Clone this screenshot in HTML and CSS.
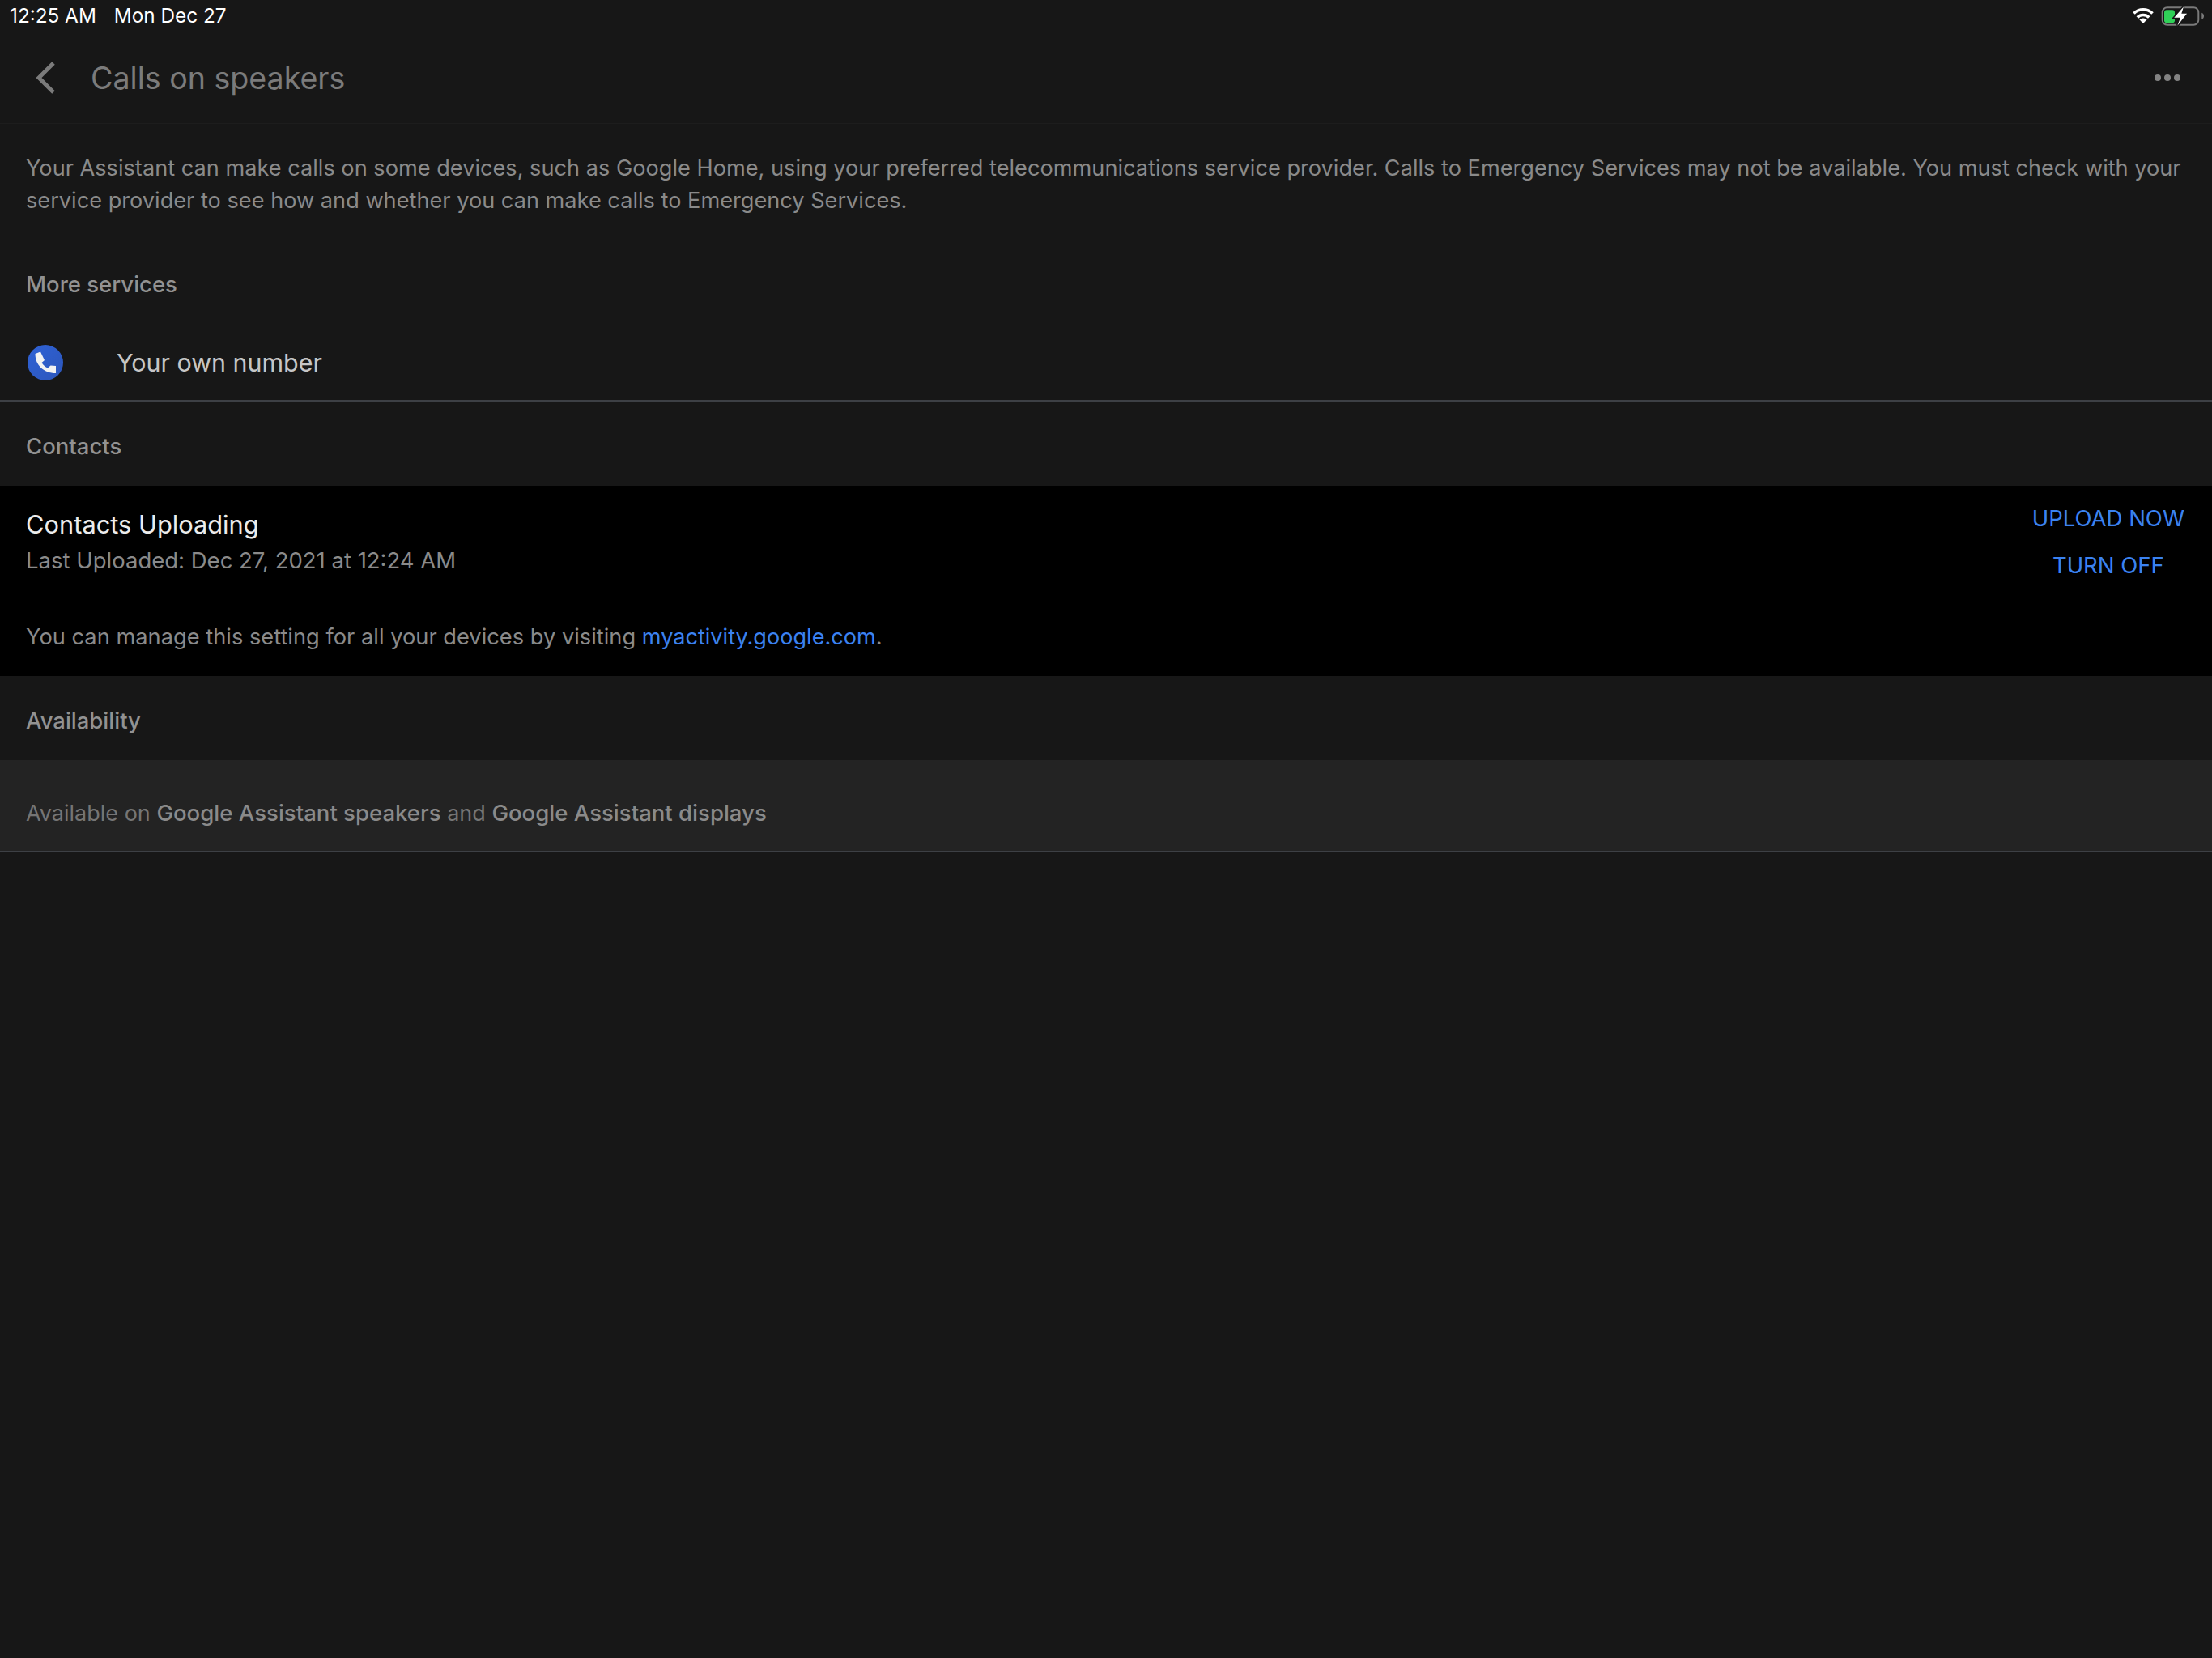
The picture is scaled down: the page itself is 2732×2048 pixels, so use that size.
FILE: index.html
```html
<!DOCTYPE html>
<html lang="en">
<head>
<meta charset="utf-8">
<title>Calls on speakers</title>
<link rel="stylesheet" href="styles.css">
</head>
<body>
<div class="status">
  <div class="status-left"><span>12:25 AM</span><span>Mon Dec 27</span></div>
  <div class="status-right">
    <svg class="wifi" width="28" height="22" viewBox="0 0 28 22"><path d="M14 21l-4.600-4.700a6.600 6.600 0 0 1 9.200 0z" fill="#fff"/><path d="M6.800 13.500a10.300 10.300 0 0 1 14.400 0M2.500 8.500a16.400 16.400 0 0 1 23 0" fill="none" stroke="#fff" stroke-width="3.600"/></svg>
    <svg class="battery" width="54" height="26" viewBox="0 0 54 26"><rect x="2.700" y="3.300" width="44.600" height="21.400" rx="6" fill="none" stroke="#7a7a7a" stroke-width="2"/><rect x="5" y="6.300" width="13" height="16" rx="3" fill="#30d158"/><path d="M51.300 9.700c2 .6 2.700 2.400 2.700 4.100s-.7 3.600-2.700 4.200z" fill="#7a7a7a"/><path d="M29 2.300L17.300 15.700H25l-3.700 10L33 10.700h-6.700z" fill="#fff" stroke="#171717" stroke-width="3" paint-order="stroke"/></svg>
  </div>
</div>
<header class="topbar">
  <svg class="back" width="26" height="42" viewBox="0 0 26 42"><path d="M23 3L5 21l18 18" fill="none" stroke="#7b7b7b" stroke-width="5"/></svg>
  <h1 class="title">Calls on speakers</h1>
  <div class="dots"><i></i><i></i><i></i></div>
</header>
<p class="intro">Your Assistant can make calls on some devices, such as Google Home, using your preferred telecommunications service provider. Calls to Emergency Services may not be available. You must check with your service provider to see how and whether you can make calls to Emergency Services.</p>
<h2 class="section first">More services</h2>
<div class="service">
  <svg class="phone" width="44" height="44" viewBox="0 0 44 44"><defs><linearGradient id="g" x1="0" y1="0" x2="1" y2="1"><stop offset="0" stop-color="#2f62d6"/><stop offset="1" stop-color="#2c56bb"/></linearGradient></defs><circle cx="22" cy="22" r="22" fill="url(#g)"/><path d="M9.500 11L16 8.500 21 19l-3.500 3C19.500 25 22 27.500 25 28.500l3.500-3 6.500.5v9C20 35 9.500 25 9.500 11z" fill="#f2f2f2"/></svg>
  <span class="service-name">Your own number</span>
</div>
<h2 class="section">Contacts</h2>
<section class="contacts">
  <div class="contacts-top">
    <div>
      <div class="contacts-title">Contacts Uploading</div>
      <div class="contacts-sub">Last Uploaded: Dec 27, 2021 at 12:24 AM</div>
    </div>
    <div class="actions"><a>UPLOAD NOW</a><a>TURN OFF</a></div>
  </div>
  <p class="manage">You can manage this setting for all your devices by visiting <a>myactivity.google.com</a>.</p>
</section>
<h2 class="section">Availability</h2>
<div class="avail">Available on <b>Google Assistant speakers</b> and <b>Google Assistant displays</b></div>
</body>
</html>
```
FILE: styles.css
```css
* { box-sizing: border-box; }
html, body { margin: 0; padding: 0; }
body {
  width: 2732px;
  height: 2048px;
  overflow: hidden;
  background: #171717;
  font-family: Inter, "Liberation Sans", sans-serif;
  color: #8e8e8e;
  font-size: 27.16px;
}
.status {
  height: 38px;
  padding: 0 10px 0 12px;
  display: flex;
  justify-content: space-between;
  align-items: center;
  color: #fff;
  font-size: 24.3px;
}
.status-left { display: flex; gap: 22px; }
.status-right { display: flex; align-items: center; gap: 7px; }
.topbar {
  height: 115px;
  padding: 2px 39px 0 43px;
  display: flex;
  align-items: center;
  border-bottom: 1px solid #1d1d1d;
}
.back { flex: none; }
.title {
  margin: 0 0 0 43px;
  font-size: 37.6px;
  font-weight: 400;
  color: #7b7b7b;
  flex: 1;
}
.dots { display: flex; gap: 4px; }
.dots i { width: 8px; height: 8px; border-radius: 50%; background: #838383; }
.intro {
  margin: 0;
  padding: 35px 32px 0;
  line-height: 40px;
  height: 133px;
  color: #8a8a8a;
}
.section {
  margin: 0;
  padding: 6px 32px 0;
  height: 104px;
  display: flex;
  align-items: center;
  font-size: 27.5px;
  font-weight: 500;
  color: #929292;
}
.section.first { height: 130px; padding-top: 0; }
.service {
  height: 80px;
  padding: 0 34px 15px;
  display: flex;
  align-items: center;
  border-bottom: 2px solid #3d4045;
}
.phone { flex: none; }
.service-name { margin-left: 66px; font-size: 30.4px; color: #c6c6c6; line-height: 38px; }
.contacts { background: #000; height: 235px; padding: 28px 34px 0 32px; }
.contacts-top { display: flex; justify-content: space-between; }
.contacts-title { color: #ececec; font-size: 30.8px; line-height: 40px; }
.contacts-sub { color: #8a8a8a; font-size: 27.5px; line-height: 36px; margin-top: 6px; }
.actions {
  display: flex;
  flex-direction: column;
  align-items: center;
  gap: 24px;
  color: #3b82f0;
  font-size: 27.5px;
  line-height: 34px;
  margin-top: -5px;
}
.manage { margin: 52px 0 0; color: #8a8a8a; font-size: 27.25px; line-height: 40px; }
.manage a { color: #3b82f0; font-size: 27.1px; }
.avail {
  background: #232323;
  height: 114px;
  padding: 45px 32px 0;
  font-size: 27px;
  line-height: 40px;
  border-bottom: 2px solid #3d4045;
  color: #757575;
}
.avail b { font-size: 27.55px; font-weight: 500; color: #8a8a8a; }
```
